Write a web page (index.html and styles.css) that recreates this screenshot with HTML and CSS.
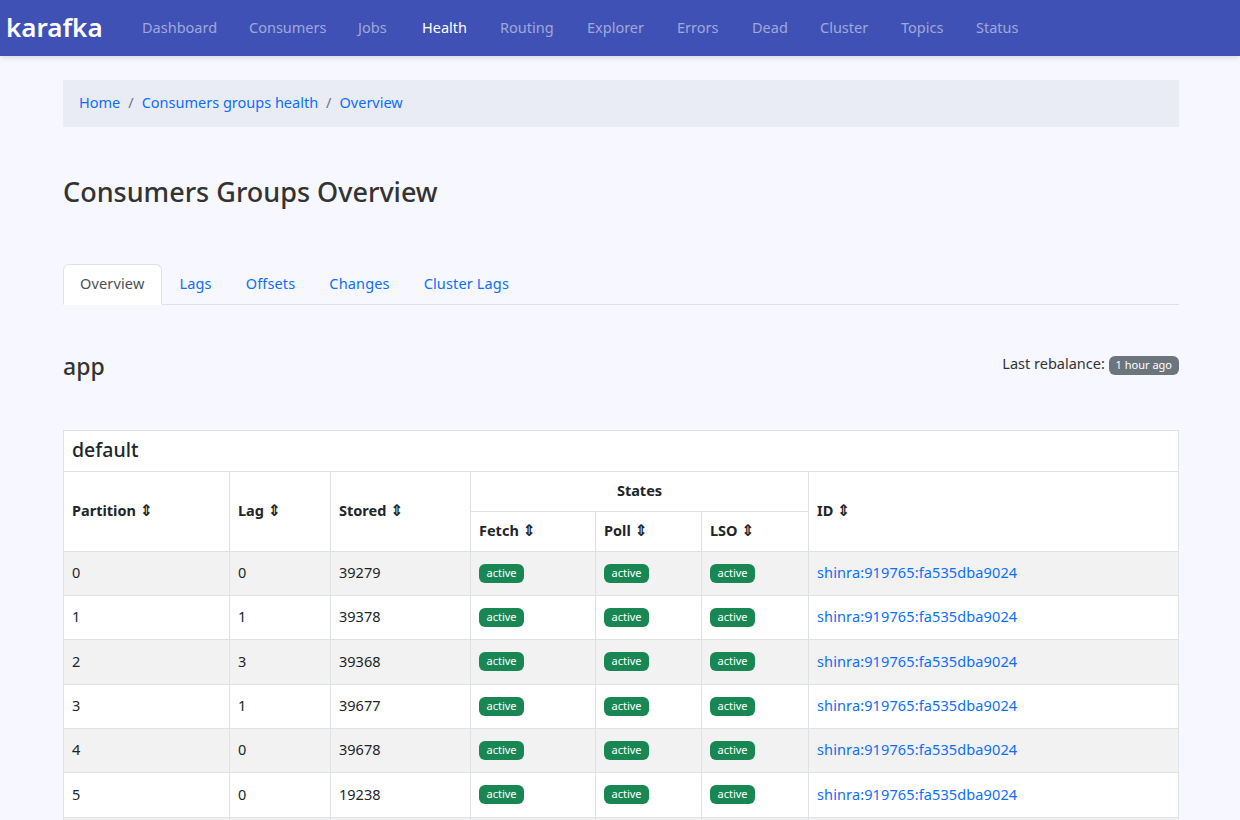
FILE: index.html
```html
<!DOCTYPE html>
<html>
  <head>
    <title>Karafka Web UI</title>
    <link rel="stylesheet" href="styles.css">
  </head>
  <body>
    <nav class="navbar">
      <a class="brand" href="#">karafka</a>
      <ul class="nav-links">
        <li><a href="#">Dashboard</a></li>
        <li><a href="#">Consumers</a></li>
        <li><a href="#">Jobs</a></li>
        <li><a class="active" href="#">Health</a></li>
        <li><a href="#">Routing</a></li>
        <li><a href="#">Explorer</a></li>
        <li><a href="#">Errors</a></li>
        <li><a href="#">Dead</a></li>
        <li><a href="#">Cluster</a></li>
        <li><a href="#">Topics</a></li>
        <li><a href="#">Status</a></li>
      </ul>
    </nav>

    <main class="container">
      <ol class="breadcrumb">
        <li><a href="#">Home</a></li>
        <li class="sep">/</li>
        <li><a href="#">Consumers groups health</a></li>
        <li class="sep">/</li>
        <li><a href="#">Overview</a></li>
      </ol>

      <h1 class="page-title">Consumers Groups Overview</h1>

      <ul class="tabs">
        <li><a class="tab active" href="#">Overview</a></li>
        <li><a class="tab" href="#">Lags</a></li>
        <li><a class="tab" href="#">Offsets</a></li>
        <li><a class="tab" href="#">Changes</a></li>
        <li><a class="tab" href="#">Cluster Lags</a></li>
      </ul>

      <div class="group-head">
        <h2 class="group-name">app</h2>
        <div class="rebalance">Last rebalance: <span class="badge badge-grey">1 hour ago</span></div>
      </div>

      <table class="health">
        <colgroup>
          <col class="col-partition">
          <col class="col-lag">
          <col class="col-stored">
          <col class="col-fetch">
          <col class="col-poll">
          <col class="col-lso">
          <col class="col-id">
        </colgroup>
        <thead>
          <tr class="topic-row"><th colspan="7"><h3 class="topic">default</h3></th></tr>
          <tr>
            <th rowspan="2">Partition <span class="sort">&#x21D5;</span></th>
            <th rowspan="2">Lag <span class="sort">&#x21D5;</span></th>
            <th rowspan="2">Stored <span class="sort">&#x21D5;</span></th>
            <th colspan="3" class="center">States</th>
            <th rowspan="2">ID <span class="sort">&#x21D5;</span></th>
          </tr>
          <tr>
            <th>Fetch <span class="sort">&#x21D5;</span></th>
            <th>Poll <span class="sort">&#x21D5;</span></th>
            <th>LSO <span class="sort">&#x21D5;</span></th>
          </tr>
        </thead>
        <tbody>
          <tr><td>0</td><td>0</td><td>39279</td><td><span class="badge">active</span></td><td><span class="badge">active</span></td><td><span class="badge">active</span></td><td><a href="#">shinra:919765:fa535dba9024</a></td></tr>
          <tr><td>1</td><td>1</td><td>39378</td><td><span class="badge">active</span></td><td><span class="badge">active</span></td><td><span class="badge">active</span></td><td><a href="#">shinra:919765:fa535dba9024</a></td></tr>
          <tr><td>2</td><td>3</td><td>39368</td><td><span class="badge">active</span></td><td><span class="badge">active</span></td><td><span class="badge">active</span></td><td><a href="#">shinra:919765:fa535dba9024</a></td></tr>
          <tr><td>3</td><td>1</td><td>39677</td><td><span class="badge">active</span></td><td><span class="badge">active</span></td><td><span class="badge">active</span></td><td><a href="#">shinra:919765:fa535dba9024</a></td></tr>
          <tr><td>4</td><td>0</td><td>39678</td><td><span class="badge">active</span></td><td><span class="badge">active</span></td><td><span class="badge">active</span></td><td><a href="#">shinra:919765:fa535dba9024</a></td></tr>
          <tr><td>5</td><td>0</td><td>19238</td><td><span class="badge">active</span></td><td><span class="badge">active</span></td><td><span class="badge">active</span></td><td><a href="#">shinra:919765:fa535dba9024</a></td></tr>
          <tr class="row-cut"><td></td><td></td><td></td><td></td><td></td><td></td><td></td></tr>
        </tbody>
      </table>
    </main>
  </body>
</html>
```

FILE: styles.css
```css
body {
  margin: 0;
  height: 820px;
  overflow: hidden;
  background-color: #f6f7ff;
  color: #333;
  font-family: "Noto Sans", sans-serif;
  font-size: 14.5px;
}
a {
  color: #0d6efd;
  text-decoration: none;
}
ul, ol {
  list-style: none;
  margin: 0;
  padding: 0;
}

/* top bar */
.navbar {
  display: flex;
  align-items: center;
  height: 56px;
  padding-left: 6px;
  padding-bottom: 2px;
  box-sizing: border-box;
  background-color: #3f51b5;
  box-shadow: 0 2px 5px rgba(0, 0, 0, 0.12);
}
.brand {
  width: 136px;
  color: #fff;
  font-size: 26px;
  font-weight: 600;
}
.nav-links {
  display: grid;
  grid-template-columns: 75px 77px 32px 46px 55px 58px 43px 36px 49px 43px 44px;
  gap: 32px;
}
.nav-links li {
  white-space: nowrap;
}
.nav-links a {
  color: rgba(255, 255, 255, 0.5);
}
.nav-links a.active {
  color: #fff;
}

/* content */
.container {
  padding: 24px 61px 0 63px;
}
.breadcrumb {
  display: flex;
  align-items: center;
  gap: 8px;
  height: 47px;
  padding: 0 0 3px 16px;
  box-sizing: border-box;
  background-color: #e9ecf5;
}
.breadcrumb .sep {
  color: #6c757d;
}
.page-title {
  margin: 48px 0 55px;
  font-size: 27px;
  line-height: 34px;
  font-weight: 500;
}

/* tabs */
.tabs {
  display: flex;
  height: 40px;
  border-bottom: 1px solid #dee2e6;
  letter-spacing: 0.15px;
}
.tab {
  display: block;
  box-sizing: border-box;
  height: 40px;
  padding: 0 16px;
  line-height: 37px;
  border: 1px solid transparent;
}
.tab.active {
  height: 41px;
  padding-right: 17px;
  color: #495057;
  background-color: #fff;
  border-color: #dee2e6 #dee2e6 #fff;
  border-radius: 6px 6px 0 0;
}

.group-head {
  display: flex;
  justify-content: space-between;
  height: 125px;
  padding-top: 46px;
  box-sizing: border-box;
}
.group-name {
  margin: 0;
  font-size: 23px;
  line-height: 30px;
  font-weight: 500;
}
.rebalance {
  line-height: 24px;
}

/* table */
.health {
  width: 1116px;
  table-layout: fixed;
  border-collapse: collapse;
  background-color: #fff;
}
.col-partition { width: 166px; }
.col-lag { width: 101px; }
.col-stored { width: 140px; }
.col-fetch { width: 125px; }
.col-poll { width: 106px; }
.col-lso { width: 107px; }
.col-id { width: 370px; }
.health th, .health td {
  padding: 0 8px 3px;
  border: 1px solid #dee2e6;
  text-align: left;
  color: #212529;
}
.health th {
  height: 36px;
  font-weight: 700;
}
.health th.center {
  text-align: center;
}
.health .topic-row th {
  height: 36.8px;
}
.topic {
  margin: 0;
  font-size: 19.5px;
  font-weight: 500;
}
.health td {
  height: 40.33px;
}
.health tbody tr:nth-child(odd) td {
  background-color: #f2f2f2;
}
.health tbody .row-cut td {
  height: 2px;
  padding: 0;
  border-bottom: 0;
}
.health td a {
  color: #0d6efd;
  letter-spacing: 0.12px;
}
.sort {
  font-family: "DejaVu Sans", sans-serif;
  font-size: 16px;
  line-height: 1;
}

/* badges */
.badge {
  display: inline-block;
  padding: 0 7.5px;
  height: 19px;
  line-height: 18px;
  border-radius: 6px;
  background-color: #198754;
  color: #fff;
  font-size: 11px;
  vertical-align: middle;
}
.badge-grey {
  padding: 0 7px;
  background-color: #6c757d;
}
```
